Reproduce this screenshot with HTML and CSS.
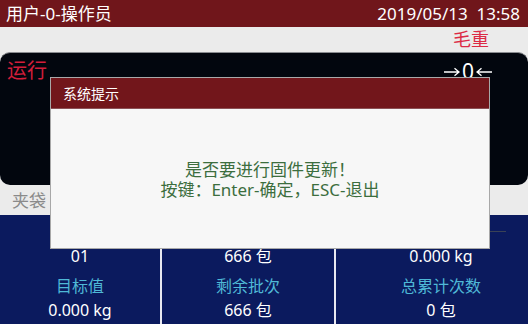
FILE: index.html
```html
<!DOCTYPE html>
<html lang="zh">
<head>
<meta charset="utf-8">
<link rel="stylesheet" href="styles.css">
</head>
<body>
<div class="screen">
  <header class="topbar">
    <span class="user">用户-0-操作员</span>
    <span class="clock">2019/05/13&nbsp;&nbsp;13:58</span>
  </header>
  <div class="mode-row"><span class="mode">毛重</span></div>
  <section class="weigh">
    <div class="weigh-top">
      <span class="status">运行</span>
      <span class="zero">
        <svg class="arr" viewBox="0 0 16 10" width="16" height="10"><path d="M0 5H15M10.5 1.2L15 5L10.5 8.8" fill="none" stroke="#fff" stroke-width="1.3"/></svg>
        <span class="digit">0</span>
        <svg class="arr" viewBox="0 0 16 10" width="16" height="10"><path d="M16 5H1M5.5 1.2L1 5L5.5 8.8" fill="none" stroke="#fff" stroke-width="1.3"/></svg>
      </span>
    </div>
  </section>
  <div class="strip"><span class="strip-label">夹袋</span></div>
  <section class="stats">
    <div class="col">
      <div class="val first">01</div>
      <div class="lbl">目标值</div>
      <div class="val">0.000 kg</div>
    </div>
    <div class="col">
      <div class="val first">666 包</div>
      <div class="lbl">剩余批次</div>
      <div class="val">666 包</div>
    </div>
    <div class="col col-last">
      <div class="rule"></div>
      <div class="val first">0.000 kg</div>
      <div class="lbl">总累计次数</div>
      <div class="val">0 包</div>
    </div>
  </section>
  <div class="dialog">
    <div class="dialog-title">系统提示</div>
    <div class="dialog-body">
      <p class="msg">是否要进行固件更新<span class="pn">！</span></p>
      <p class="msg">按键<span class="pn">：</span>Enter-确定<span class="pn">，</span>ESC-退出</p>
    </div>
  </div>
</div>
</body>
</html>
```
FILE: styles.css
```css
* { box-sizing: border-box; margin: 0; padding: 0; }
html, body { width: 528px; height: 324px; overflow: hidden; }
body {
  background: #ebebeb;
  font-family: "Noto Sans", "Noto Sans CJK SC", sans-serif;
}
.screen { position: relative; width: 528px; height: 324px; display: flex; flex-direction: column; }
.topbar {
  height: 27px;
  background: #70161b;
  color: #fff;
  font-size: 17px;
  line-height: 27px;
  display: flex;
  justify-content: space-between;
  padding: 0 8px 0 6px;
}
.mode-row {
  height: 25px;
  text-align: right;
  padding-right: 39px;
}
.mode { color: #dc2a45; font-size: 18px; line-height: 24px; }
.weigh {
  height: 133px;
  background: #02060e;
  border-top: 1px solid #8a8c90;
  border-radius: 10px;
}
.weigh-top {
  display: flex;
  justify-content: space-between;
  align-items: center;
  padding: 6px 36px 0 7px;
  height: 30px;
}
.status { color: #d21e3a; font-size: 20px; line-height: 24px; }
.zero { color: #fff; display: flex; align-items: center; gap: 2px; }
.digit { font-size: 21px; line-height: 24px; }
.arr { display: block; margin-top: 1px; }
.strip { height: 30px; padding: 4px 0 0 12px; }
.strip-label { color: #8a8a8a; font-size: 17px; line-height: 24px; }
.stats {
  flex: 1;
  background: #0b1a5e;
  display: grid;
  grid-template-columns: 160px 174px 194px;
}
.col {
  text-align: center;
  color: #fff;
  padding-top: 29px;
  position: relative;
}
.col + .col { border-left: 2px solid #e8e8f0; }
.col-last { padding-left: 18px; }
.val { font-size: 16px; line-height: 24px; }
.val.first { margin-bottom: 6px; }
.lbl { color: #4fb8d6; font-size: 16px; line-height: 24px; }
.rule {
  position: absolute;
  left: 26px;
  right: 22px;
  top: 16px;
  border-top: 1px solid #3a4256;
}
.dialog {
  position: absolute;
  left: 50px;
  top: 77px;
  width: 440px;
  height: 172px;
  border: 1px solid #a8a8a8;
  background: #f7f7f7;
  display: flex;
  flex-direction: column;
}
.dialog-title {
  height: 31px;
  background: #72161b;
  color: #fff;
  font-size: 14px;
  line-height: 31px;
  padding-left: 12px;
  border-bottom: 1px solid #8c5055;
}
.dialog-body {
  flex: 1;
  text-align: center;
  color: #3c6e3e;
  font-size: 17px;
  padding-top: 51px;
}
.msg { height: 20px; line-height: 20px; }
.pn { display: inline-block; width: 1em; text-align: center; }
```
